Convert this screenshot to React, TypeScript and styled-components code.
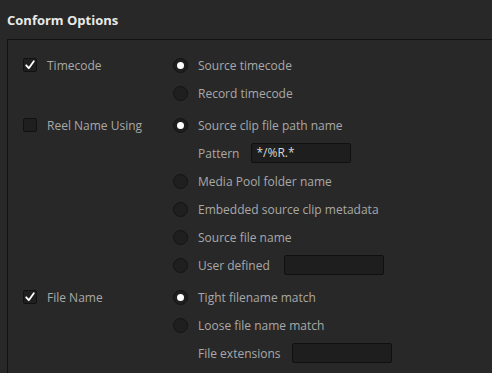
import React from "react";
import styled, { createGlobalStyle } from "styled-components";

const Global = createGlobalStyle`
	html, body {
		margin: 0;
		padding: 0;
		background: #282828;
		width: 492px;
		height: 373px;
		overflow: hidden;
	}
	body {
		font-family: "Open Sans", "Noto Sans", sans-serif;
	}
`;

const Page = styled.div`
	padding: 0 0 0 7px;
`;

const Title = styled.div`
	height: 39px;
	box-sizing: border-box;
	padding-top: 11px;
	font-size: 13px;
	font-weight: 700;
	color: #e8e8e8;
	line-height: 18px;
`;

const Panel = styled.div`
	border-top: 1px solid #121212;
	border-left: 1px solid #121212;
	padding: 11px 0 0 15px;
	height: 334px;
	box-sizing: border-box;
	overflow: hidden;
`;

const Group = styled.div`
	display: grid;
	grid-template-columns: 150px 1fr;
	margin-bottom: 4px;
`;

const Col = styled.div`
	display: flex;
	flex-direction: column;
`;

const Row = styled.div<{ $indent?: boolean }>`
	height: 28px;
	display: flex;
	align-items: center;
	padding-left: ${(p) => (p.$indent ? "25px" : "0")};
`;

const Label = styled.span`
	font-size: 12px;
	color: #a8a8a8;
	white-space: nowrap;
`;

const Box = styled.span`
	width: 14px;
	height: 14px;
	box-sizing: border-box;
	border: 1px solid #111;
	border-radius: 2px;
	background: #1f1f1f;
	margin-right: 10px;
	display: flex;
	align-items: center;
	justify-content: center;
`;

const Radio = styled.span<{ $on?: boolean }>`
	width: 15px;
	height: 15px;
	box-sizing: border-box;
	border-radius: 50%;
	border: 1px solid #141414;
	background: #1f1f1f;
	margin-right: 10px;
	display: flex;
	align-items: center;
	justify-content: center;
	&::after {
		content: "";
		display: ${(p) => (p.$on ? "block" : "none")};
		width: 7px;
		height: 7px;
		border-radius: 50%;
		background: #fff;
	}
`;

const Field = styled.div<{ $w: number; $gap: number }>`
	width: ${(p) => p.$w}px;
	height: 20px;
	box-sizing: border-box;
	margin-left: ${(p) => p.$gap}px;
	border: 1px solid #101010;
	border-radius: 2px;
	background: #1e1e1e;
	font-size: 12px;
	color: #d8d8d8;
	line-height: 18px;
	padding-left: 4px;
`;

const Check = ({ on }: { on: boolean }) => (
	<Box>
		{on && (
			<svg width="12" height="12" viewBox="0 0 12 12">
				<path
					d="M2.2 6.3 L4.8 9.2 L9.8 2.2"
					fill="none"
					stroke="#fff"
					strokeWidth="1.8"
					strokeLinecap="round"
					strokeLinejoin="round"
				/>
			</svg>
		)}
	</Box>
);

const Option = ({ on, label }: { on?: boolean; label: string }) => (
	<Row>
		<Radio $on={on} />
		<Label>{label}</Label>
	</Row>
);

export default function App() {
	return (
		<Page>
			<Global />
			<Title>Conform Options</Title>
			<Panel>
				<Group>
					<Col>
						<Row>
							<Check on />
							<Label>Timecode</Label>
						</Row>
					</Col>
					<Col>
						<Option on label="Source timecode" />
						<Option label="Record timecode" />
					</Col>
				</Group>
				<Group>
					<Col>
						<Row>
							<Check on={false} />
							<Label>Reel Name Using</Label>
						</Row>
					</Col>
					<Col>
						<Option on label="Source clip file path name" />
						<Row $indent>
							<Label>Pattern</Label>
							<Field $w={100} $gap={12}>
								*/%R.*
							</Field>
						</Row>
						<Option label="Media Pool folder name" />
						<Option label="Embedded source clip metadata" />
						<Option label="Source file name" />
						<Row>
							<Radio />
							<Label>User defined</Label>
							<Field $w={100} $gap={14} />
						</Row>
					</Col>
				</Group>
				<Group>
					<Col>
						<Row>
							<Check on />
							<Label>File Name</Label>
						</Row>
					</Col>
					<Col>
						<Option on label="Tight filename match" />
						<Option label="Loose file name match" />
						<Row $indent>
							<Label>File extensions</Label>
							<Field $w={100} $gap={11} />
						</Row>
					</Col>
				</Group>
			</Panel>
		</Page>
	);
}
